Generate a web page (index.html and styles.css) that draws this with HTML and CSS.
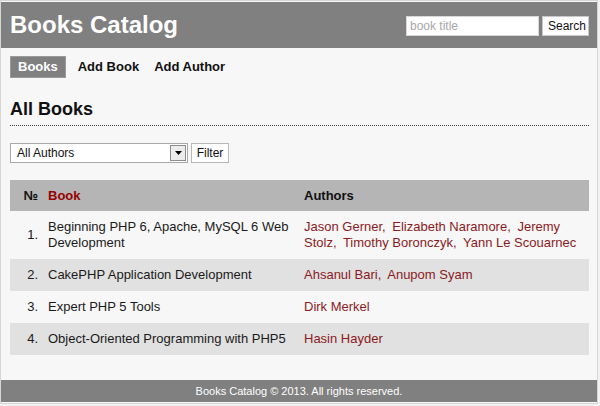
FILE: index.html
```html
<!DOCTYPE html>
<html>
<head>
<meta charset="utf-8">
<title>Books Catalog</title>
<link rel="stylesheet" href="styles.css">
</head>
<body>
<div class="page">
  <header class="header">
    <h1 class="logo">Books Catalog</h1>
    <form class="search">
      <input class="search-input" type="text" placeholder="book title">
      <button class="btn search-btn" type="button">Search</button>
    </form>
  </header>
  <main class="main">
    <nav class="nav">
      <a class="nav-item active" href="#">Books</a>
      <a class="nav-item" href="#">Add Book</a>
      <a class="nav-item" href="#">Add Author</a>
    </nav>
    <h2 class="title">All Books</h2>
    <div class="filter">
      <div class="select">
        <span class="select-text">All Authors</span>
        <span class="select-arrow"><svg width="7" height="4" viewBox="0 0 7 4"><path d="M0 0h7L3.5 4z" fill="#000"/></svg></span>
      </div>
      <button class="btn filter-btn" type="button">Filter</button>
    </div>
    <table class="books">
      <thead>
        <tr><th class="num">№</th><th class="book-h">Book</th><th>Authors</th></tr>
      </thead>
      <tbody>
        <tr>
          <td class="num">1.</td>
          <td class="book"><span>Beginning PHP 6, Apache, MySQL 6 Web</span> <span>Development</span></td>
          <td class="authors"><a href="#">Jason Gerner,</a> <a href="#">Elizabeth Naramore,</a> <a href="#"><span>Jeremy</span> <span>Stolz,</span></a> <a href="#">Timothy Boronczyk,</a> <a href="#">Yann Le Scouarnec</a></td>
        </tr>
        <tr class="alt">
          <td class="num">2.</td>
          <td class="book">CakePHP Application Development</td>
          <td class="authors"><a href="#">Ahsanul Bari,</a> <a href="#">Anupom Syam</a></td>
        </tr>
        <tr>
          <td class="num">3.</td>
          <td class="book">Expert PHP 5 Tools</td>
          <td class="authors"><a href="#">Dirk Merkel</a></td>
        </tr>
        <tr class="alt">
          <td class="num">4.</td>
          <td class="book">Object-Oriented Programming with PHP5</td>
          <td class="authors"><a href="#">Hasin Hayder</a></td>
        </tr>
      </tbody>
    </table>
  </main>
  <footer class="footer">Books Catalog © 2013. All rights reserved.</footer>
</div>
</body>
</html>
```
FILE: styles.css
```css
* { box-sizing: border-box; }
html, body { margin: 0; padding: 0; }
body {
  background: #f2f2f2;
  font-family: "Liberation Sans", Arial, sans-serif;
  color: #111;
}
.page {
  width: 598px;
  height: 404px;
  border: 1px solid #d6d6d6;
  background: #f7f7f7;
  display: flex;
  flex-direction: column;
}
.header {
  background: #808080;
  height: 46px;
  margin-top: 1px;
  padding: 0 8px 0 9px;
  display: flex;
  align-items: center;
  justify-content: space-between;
}
.logo {
  margin: 0;
  color: #fff;
  font-size: 24px;
  font-weight: bold;
  line-height: 28px;
}
.search { display: flex; gap: 3px; margin-top: 1px; }
.search-input {
  width: 133px;
  height: 20px;
  border: 1px solid #d8d8d8;
  background: #fff;
  font-family: inherit;
  font-size: 12px;
  padding: 0 3px;
  outline: none;
}
.search-input::placeholder { color: #a8a8a8; }
.btn {
  height: 20px;
  background: #fff;
  border: 1px solid #c8c8c8;
  font-family: inherit;
  font-size: 12px;
  color: #111;
  padding: 0 5px;
}
.search-btn { width: 47px; }
.main { flex: 1; padding: 0 8px 0 9px; }
.nav { display: flex; margin-top: 8px; }
.nav-item {
  font-size: 13px;
  font-weight: bold;
  color: #111;
  text-decoration: none;
  line-height: 22px;
  padding: 0 7px;
  margin-right: 1px;
}
.nav-item.active {
  background: #808080;
  color: #fff;
  margin-right: 5px;
  border: 1px solid #9a9a9a;
  line-height: 20px;
}
.title {
  margin: 19px 0 0;
  font-size: 18px;
  font-weight: bold;
  line-height: 24px;
  padding-bottom: 4px;
  border-bottom: 1px dotted #444;
}
.filter { display: flex; gap: 3px; margin-top: 17px; }
.select {
  width: 178px;
  height: 20px;
  background: #fff;
  border: 1px solid #a8a8a8;
  display: flex;
  align-items: center;
  justify-content: space-between;
  padding: 0 1px 0 6px;
  font-size: 12px;
}
.select-arrow {
  width: 16px;
  height: 16px;
  border: 1px solid #8c8c8c;
  background: #ececec;
  display: flex;
  align-items: center;
  justify-content: center;
}
.filter-btn { width: 38px; border-color: #b8b8b8; padding: 0; }
.books {
  width: 579px;
  margin-top: 17px;
  border-collapse: collapse;
  font-size: 13px;
}
.books th {
  background: #b5b5b5;
  text-align: left;
  font-weight: bold;
  line-height: 15px;
  padding: 8px 6px;
  color: #111;
}
.books td {
  line-height: 16px;
  padding: 8px 6px;
  vertical-align: middle;
  color: #1a1a1a;
}
.books th.num, .books td.num { width: 32px; text-align: right; padding-left: 0; padding-right: 4px; }
.books th.book-h { color: #990000; width: 256px; }
.books tr.alt td { background: #e1e1e1; }
.books td.authors { color: #8b1a22; }
.authors a { color: #8b1a22; text-decoration: none; margin-right: 3px; }
.footer {
  background: #808080;
  color: #fff;
  font-size: 11px;
  text-align: center;
  height: 22px;
  line-height: 22px;
  margin-bottom: 1px;
}
```
